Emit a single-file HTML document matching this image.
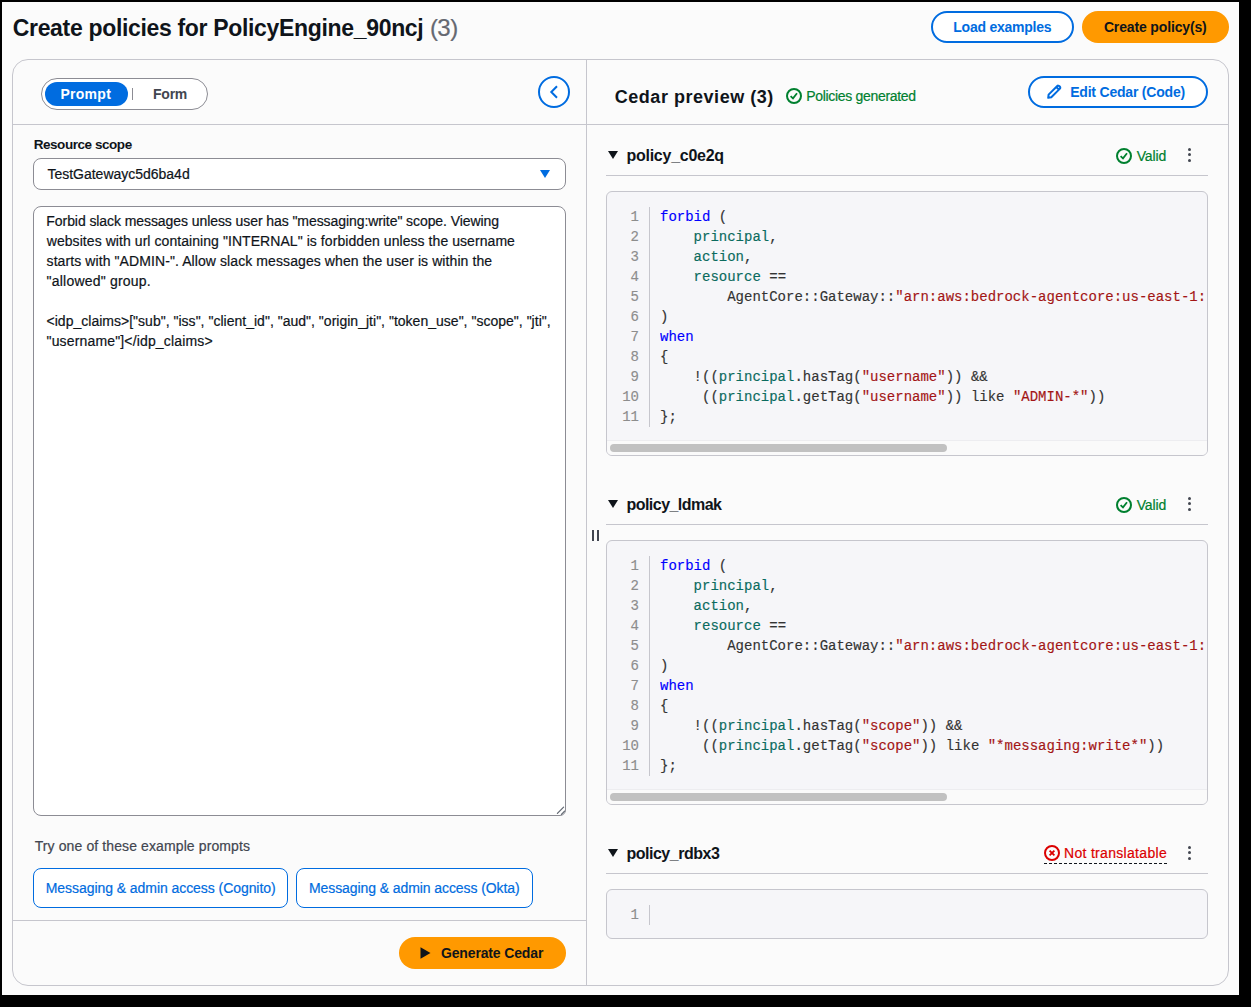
<!DOCTYPE html>
<html><head><meta charset="utf-8">
<style>
html,body{margin:0;padding:0;}
body{width:1251px;height:1007px;background:#000;position:relative;overflow:hidden;font-family:"Liberation Sans",sans-serif;}
#page{position:absolute;left:2px;top:2px;width:1237px;height:993px;background:#fbfbfb;}
.a{position:absolute;box-sizing:border-box;}
.t{position:absolute;white-space:pre;line-height:20px;-webkit-text-stroke:0.2px currentColor;}
.t.b{-webkit-text-stroke:0.01px currentColor;}
.box{position:absolute;box-sizing:border-box;left:12px;top:59px;width:1217px;height:927px;border:1px solid #c6c6cd;border-radius:16px;}
.btn-n{position:absolute;box-sizing:border-box;border:2px solid #006ce0;border-radius:16px;background:#fff;}
.btn-p{position:absolute;box-sizing:border-box;border-radius:16px;background:#ff9900;}
.code{position:absolute;box-sizing:border-box;left:606px;width:602px;border:1px solid #c6c6cd;border-radius:6px;background:#f6f6f9;overflow:hidden;}
.ln{position:absolute;right:568px;width:30px;text-align:right;font-family:"Liberation Mono",monospace;font-size:14px;line-height:20px;color:#8d8d8d;-webkit-text-stroke:0.15px currentColor;}
.gut{position:absolute;left:42px;top:15px;width:1px;background:#c6c6cd;}
.src{position:absolute;left:53px;top:15px;width:546px;overflow:hidden;}
.cl{height:20px;line-height:20px;font-family:"Liberation Mono",monospace;font-size:14px;white-space:pre;color:#333;-webkit-text-stroke:0.15px currentColor;}
.sbar{position:absolute;left:0;right:0;height:15px;background:#fafafa;border-top:1px solid #ededf0;box-sizing:border-box;}
.thumb{position:absolute;left:3px;top:3px;width:337px;height:8px;border-radius:4px;background:#c1c1c1;}
.div-h{position:absolute;height:1px;background:#c6c6cd;}
.div-v{position:absolute;width:1px;background:#c6c6cd;}
.kebab{position:absolute;width:4px;}
.kebab i{position:absolute;left:0.5px;width:3px;height:3px;border-radius:50%;background:#424650;}
</style></head><body>
<div id="page"></div>
<div class="box"></div>
<!-- dividers -->
<div class="div-h" style="left:13px;top:124px;width:1215px;"></div>
<div class="div-v" style="left:586px;top:60px;height:925px;"></div>
<div class="div-h" style="left:13px;top:920px;width:573px;"></div>
<!-- header buttons -->
<div class="btn-n" style="left:931px;top:11px;width:143px;height:32px;"></div>
<div class="btn-p" style="left:1082px;top:11px;width:147px;height:32px;"></div>
<!-- segmented -->
<div class="a" style="left:41px;top:78px;width:167px;height:32px;border:1px solid #8c8c94;border-radius:16px;background:#fff;"></div>
<div class="a" style="left:45px;top:82px;width:83px;height:24px;border-radius:12px;background:#006ce0;"></div>
<div class="a" style="left:132px;top:88px;width:1px;height:12px;background:#8c8c94;"></div>
<!-- collapse -->
<svg class="a" style="left:537px;top:75px" width="34" height="34" viewBox="0 0 34 34"><circle cx="17" cy="17" r="15" fill="#fff" stroke="#006ce0" stroke-width="2"/><polyline points="20,11.2 14.3,17 20,22.7" fill="none" stroke="#006ce0" stroke-width="2"/></svg>
<!-- right header -->
<svg class="a" style="left:786px;top:88px" width="16" height="16" viewBox="0 0 16 16"><circle cx="8" cy="8" r="7" fill="none" stroke="#00802f" stroke-width="2"/><polyline points="4.6,8.1 7,10.4 11,5.3" fill="none" stroke="#00802f" stroke-width="1.8"/></svg>
<div class="btn-n" style="left:1028px;top:76px;width:180px;height:32px;"></div>
<svg class="a" style="left:1046px;top:84px" width="16" height="16" viewBox="0 0 16 16"><path d="M2.2 13.8 L2.6 10.6 L11 2.2 Q12.2 1 13.5 2.3 Q14.9 3.7 13.7 4.9 L5.3 13.3 Z M10.3 3 L13 5.7" fill="none" stroke="#006ce0" stroke-width="2" stroke-linejoin="round"/></svg>
<!-- select -->
<div class="a" style="left:33px;top:158px;width:533px;height:32px;border:1px solid #8c8c94;border-radius:8px;background:#fff;"></div>
<svg class="a" style="left:539px;top:169px" width="12" height="10" viewBox="0 0 12 10"><path d="M1 1 L11 1 L6 9 Z" fill="#006ce0"/></svg>
<!-- textarea -->
<div class="a" style="left:33px;top:206px;width:533px;height:610px;border:1px solid #8c8c94;border-radius:8px 8px 6px 8px;background:#fff;"></div>
<svg class="a" style="left:555px;top:805px" width="11" height="11" viewBox="0 0 11 11"><path d="M8.6 2.2 L2.4 8.4 M9.6 6.2 L6.4 9.4" stroke="#5f6670" stroke-width="1.2" stroke-linecap="round"/></svg>
<!-- example buttons -->
<div class="a" style="left:33px;top:868px;width:255px;height:40px;border:1px solid #006ce0;border-radius:8px;background:#fff;"></div>
<div class="a" style="left:296px;top:868px;width:237px;height:40px;border:1px solid #006ce0;border-radius:8px;background:#fff;"></div>
<!-- generate -->
<div class="btn-p" style="left:399px;top:937px;width:167px;height:32px;"></div>
<svg class="a" style="left:419px;top:946px" width="13" height="14" viewBox="0 0 13 14"><path d="M1.5 1.2 L11.5 7 L1.5 12.8 Z" fill="#0f141a"/></svg>
<!-- drag handle -->
<div class="a" style="left:592px;top:530px;width:2px;height:11px;background:#424650;"></div>
<div class="a" style="left:597px;top:530px;width:2px;height:11px;background:#424650;"></div>
<!-- policy headers -->
<svg class="a" style="left:607px;top:150px" width="12" height="10" viewBox="0 0 12 10"><path d="M1 1 L11 1 L6 9 Z" fill="#0f141a"/></svg>
<svg class="a" style="left:607px;top:499px" width="12" height="10" viewBox="0 0 12 10"><path d="M1 1 L11 1 L6 9 Z" fill="#0f141a"/></svg>
<svg class="a" style="left:607px;top:848px" width="12" height="10" viewBox="0 0 12 10"><path d="M1 1 L11 1 L6 9 Z" fill="#0f141a"/></svg>
<div class="div-h" style="left:606px;top:175px;width:602px;"></div>
<div class="div-h" style="left:606px;top:524px;width:602px;"></div>
<div class="div-h" style="left:606px;top:873px;width:602px;"></div>
<svg class="a" style="left:1116px;top:148px" width="16" height="16" viewBox="0 0 16 16"><circle cx="8" cy="8" r="7" fill="none" stroke="#00802f" stroke-width="2"/><polyline points="4.6,8.1 7,10.4 11,5.3" fill="none" stroke="#00802f" stroke-width="1.8"/></svg>
<svg class="a" style="left:1116px;top:497px" width="16" height="16" viewBox="0 0 16 16"><circle cx="8" cy="8" r="7" fill="none" stroke="#00802f" stroke-width="2"/><polyline points="4.6,8.1 7,10.4 11,5.3" fill="none" stroke="#00802f" stroke-width="1.8"/></svg>
<svg class="a" style="left:1044px;top:845px" width="16" height="16" viewBox="0 0 16 16"><circle cx="8" cy="8" r="7" fill="none" stroke="#db0000" stroke-width="2"/><path d="M5.6 5.6 L10.4 10.4 M10.4 5.6 L5.6 10.4" fill="none" stroke="#db0000" stroke-width="1.8"/></svg>
<div class="a" style="left:1044px;top:863px;width:123px;height:0;border-top:1px dashed #0f141a;"></div>
<div class="kebab" style="left:1187px;top:147px;height:16px"><i style="top:0.5px"></i><i style="top:6.2px"></i><i style="top:11.8px"></i></div>
<div class="kebab" style="left:1187px;top:496px;height:16px"><i style="top:0.5px"></i><i style="top:6.2px"></i><i style="top:11.8px"></i></div>
<div class="kebab" style="left:1187px;top:845px;height:16px"><i style="top:0.5px"></i><i style="top:6.2px"></i><i style="top:11.8px"></i></div>
<div class="code" style="top:191px;height:265px"><div class="ln" style="top:15px">1</div><div class="ln" style="top:35px">2</div><div class="ln" style="top:55px">3</div><div class="ln" style="top:75px">4</div><div class="ln" style="top:95px">5</div><div class="ln" style="top:115px">6</div><div class="ln" style="top:135px">7</div><div class="ln" style="top:155px">8</div><div class="ln" style="top:175px">9</div><div class="ln" style="top:195px">10</div><div class="ln" style="top:215px">11</div><div class="gut" style="height:220px"></div><div class="src"><div class="cl"><span style="color:#0000ff">forbid</span><span style="color:#333333"> (</span></div><div class="cl"><span style="color:#333333">    </span><span style="color:#0b6b5e">principal</span><span style="color:#333333">,</span></div><div class="cl"><span style="color:#333333">    </span><span style="color:#0b6b5e">action</span><span style="color:#333333">,</span></div><div class="cl"><span style="color:#333333">    </span><span style="color:#0b6b5e">resource</span><span style="color:#333333"> ==</span></div><div class="cl"><span style="color:#333333">        AgentCore::Gateway::</span><span style="color:#a31515">&quot;arn:aws:bedrock-agentcore:us-east-1:123456789012:gateway/testgatewayc5d6ba4d&quot;</span></div><div class="cl"><span style="color:#333333">)</span></div><div class="cl"><span style="color:#0000ff">when</span></div><div class="cl"><span style="color:#333333">{</span></div><div class="cl"><span style="color:#333333">    !((</span><span style="color:#0b6b5e">principal</span><span style="color:#333333">.hasTag(</span><span style="color:#a31515">&quot;username&quot;</span><span style="color:#333333">)) &amp;&amp;</span></div><div class="cl"><span style="color:#333333">     ((</span><span style="color:#0b6b5e">principal</span><span style="color:#333333">.getTag(</span><span style="color:#a31515">&quot;username&quot;</span><span style="color:#333333">)) like </span><span style="color:#a31515">&quot;ADMIN-*&quot;</span><span style="color:#333333">))</span></div><div class="cl"><span style="color:#333333">};</span></div></div><div class="sbar" style="top:248px"><div class="thumb"></div></div></div>
<div class="code" style="top:540px;height:265px"><div class="ln" style="top:15px">1</div><div class="ln" style="top:35px">2</div><div class="ln" style="top:55px">3</div><div class="ln" style="top:75px">4</div><div class="ln" style="top:95px">5</div><div class="ln" style="top:115px">6</div><div class="ln" style="top:135px">7</div><div class="ln" style="top:155px">8</div><div class="ln" style="top:175px">9</div><div class="ln" style="top:195px">10</div><div class="ln" style="top:215px">11</div><div class="gut" style="height:220px"></div><div class="src"><div class="cl"><span style="color:#0000ff">forbid</span><span style="color:#333333"> (</span></div><div class="cl"><span style="color:#333333">    </span><span style="color:#0b6b5e">principal</span><span style="color:#333333">,</span></div><div class="cl"><span style="color:#333333">    </span><span style="color:#0b6b5e">action</span><span style="color:#333333">,</span></div><div class="cl"><span style="color:#333333">    </span><span style="color:#0b6b5e">resource</span><span style="color:#333333"> ==</span></div><div class="cl"><span style="color:#333333">        AgentCore::Gateway::</span><span style="color:#a31515">&quot;arn:aws:bedrock-agentcore:us-east-1:123456789012:gateway/testgatewayc5d6ba4d&quot;</span></div><div class="cl"><span style="color:#333333">)</span></div><div class="cl"><span style="color:#0000ff">when</span></div><div class="cl"><span style="color:#333333">{</span></div><div class="cl"><span style="color:#333333">    !((</span><span style="color:#0b6b5e">principal</span><span style="color:#333333">.hasTag(</span><span style="color:#a31515">&quot;scope&quot;</span><span style="color:#333333">)) &amp;&amp;</span></div><div class="cl"><span style="color:#333333">     ((</span><span style="color:#0b6b5e">principal</span><span style="color:#333333">.getTag(</span><span style="color:#a31515">&quot;scope&quot;</span><span style="color:#333333">)) like </span><span style="color:#a31515">&quot;*messaging:write*&quot;</span><span style="color:#333333">))</span></div><div class="cl"><span style="color:#333333">};</span></div></div><div class="sbar" style="top:248px"><div class="thumb"></div></div></div>
<div class="code" style="top:889px;height:50px"><div class="ln" style="top:15px">1</div><div class="gut" style="height:20px"></div><div class="src"><div class="cl"></div></div></div>
<div class="t b" style="left:12.76px;top:18.00px;font-family:'Liberation Sans', sans-serif;font-weight:bold;font-size:23px;color:#0f141a;letter-spacing:-0.328px;">Create policies for PolicyEngine_90ncj</div>
<div class="t" style="left:429.90px;top:18.00px;font-family:'Liberation Sans', sans-serif;font-weight:normal;font-size:24px;color:#656871;letter-spacing:-0.510px;">(3)</div>
<div class="t b" style="left:953.32px;top:17.00px;font-family:'Liberation Sans', sans-serif;font-weight:bold;font-size:14px;color:#006ce0;letter-spacing:-0.250px;">Load examples</div>
<div class="t b" style="left:1103.88px;top:17.00px;font-family:'Liberation Sans', sans-serif;font-weight:bold;font-size:14px;color:#0f141a;letter-spacing:-0.143px;">Create policy(s)</div>
<div class="t b" style="left:60.42px;top:84.00px;font-family:'Liberation Sans', sans-serif;font-weight:bold;font-size:14px;color:#ffffff;letter-spacing:0.292px;">Prompt</div>
<div class="t b" style="left:152.98px;top:84.00px;font-family:'Liberation Sans', sans-serif;font-weight:bold;font-size:14px;color:#424650;letter-spacing:-0.217px;">Form</div>
<div class="t b" style="left:614.78px;top:86.50px;font-family:'Liberation Sans', sans-serif;font-weight:bold;font-size:18px;color:#0f141a;letter-spacing:0.531px;">Cedar preview (3)</div>
<div class="t" style="left:806.24px;top:86.00px;font-family:'Liberation Sans', sans-serif;font-weight:normal;font-size:14px;color:#00802f;letter-spacing:-0.313px;">Policies generated</div>
<div class="t b" style="left:1070.20px;top:82.00px;font-family:'Liberation Sans', sans-serif;font-weight:bold;font-size:14px;color:#006ce0;letter-spacing:-0.202px;">Edit Cedar (Code)</div>
<div class="t b" style="left:33.66px;top:135.00px;font-family:'Liberation Sans', sans-serif;font-weight:bold;font-size:13.5px;color:#0f141a;letter-spacing:-0.444px;">Resource scope</div>
<div class="t" style="left:47.46px;top:164.00px;font-family:'Liberation Sans', sans-serif;font-weight:normal;font-size:14px;color:#0f141a;letter-spacing:-0.012px;">TestGatewayc5d6ba4d</div>
<div class="t" style="left:46.36px;top:211.00px;font-family:'Liberation Sans', sans-serif;font-weight:normal;font-size:14px;color:#0f141a;letter-spacing:-0.076px;">Forbid slack messages unless user has &quot;messaging:write&quot; scope. Viewing</div>
<div class="t" style="left:46.76px;top:231.00px;font-family:'Liberation Sans', sans-serif;font-weight:normal;font-size:14px;color:#0f141a;letter-spacing:0.064px;">websites with url containing &quot;INTERNAL&quot; is forbidden unless the username</div>
<div class="t" style="left:46.56px;top:251.00px;font-family:'Liberation Sans', sans-serif;font-weight:normal;font-size:14px;color:#0f141a;letter-spacing:0.089px;">starts with &quot;ADMIN-&quot;. Allow slack messages when the user is within the</div>
<div class="t" style="left:46.56px;top:271.00px;font-family:'Liberation Sans', sans-serif;font-weight:normal;font-size:14px;color:#0f141a;letter-spacing:0.214px;">&quot;allowed&quot; group.</div>
<div class="t" style="left:46.56px;top:311.00px;font-family:'Liberation Sans', sans-serif;font-weight:normal;font-size:14px;color:#0f141a;letter-spacing:0.014px;">&lt;idp_claims&gt;[&quot;sub&quot;, &quot;iss&quot;, &quot;client_id&quot;, &quot;aud&quot;, &quot;origin_jti&quot;, &quot;token_use&quot;, &quot;scope&quot;, &quot;jti&quot;,</div>
<div class="t" style="left:46.56px;top:331.00px;font-family:'Liberation Sans', sans-serif;font-weight:normal;font-size:14px;color:#0f141a;letter-spacing:0.156px;">&quot;username&quot;]&lt;/idp_claims&gt;</div>
<div class="t" style="left:34.68px;top:836.00px;font-family:'Liberation Sans', sans-serif;font-weight:normal;font-size:14px;color:#424650;letter-spacing:0.110px;">Try one of these example prompts</div>
<div class="t" style="left:45.78px;top:878.00px;font-family:'Liberation Sans', sans-serif;font-weight:normal;font-size:14px;color:#006ce0;letter-spacing:-0.061px;">Messaging &amp; admin access (Cognito)</div>
<div class="t" style="left:309.00px;top:878.00px;font-family:'Liberation Sans', sans-serif;font-weight:normal;font-size:14px;color:#006ce0;letter-spacing:-0.085px;">Messaging &amp; admin access (Okta)</div>
<div class="t b" style="left:440.98px;top:943.00px;font-family:'Liberation Sans', sans-serif;font-weight:bold;font-size:14px;color:#0f141a;letter-spacing:-0.146px;">Generate Cedar</div>
<div class="t b" style="left:626.46px;top:146.00px;font-family:'Liberation Sans', sans-serif;font-weight:bold;font-size:16px;color:#0f141a;letter-spacing:-0.259px;">policy_c0e2q</div>
<div class="t b" style="left:626.46px;top:495.00px;font-family:'Liberation Sans', sans-serif;font-weight:bold;font-size:16px;color:#0f141a;letter-spacing:-0.531px;">policy_ldmak</div>
<div class="t b" style="left:626.46px;top:844.00px;font-family:'Liberation Sans', sans-serif;font-weight:bold;font-size:16px;color:#0f141a;letter-spacing:-0.488px;">policy_rdbx3</div>
<div class="t" style="left:1136.68px;top:146.00px;font-family:'Liberation Sans', sans-serif;font-weight:normal;font-size:14px;color:#00802f;letter-spacing:-0.111px;">Valid</div>
<div class="t" style="left:1136.68px;top:495.00px;font-family:'Liberation Sans', sans-serif;font-weight:normal;font-size:14px;color:#00802f;letter-spacing:-0.111px;">Valid</div>
<div class="t" style="left:1064.02px;top:843.00px;font-family:'Liberation Sans', sans-serif;font-weight:normal;font-size:14px;color:#db0000;letter-spacing:0.307px;">Not translatable</div>
</body></html>
